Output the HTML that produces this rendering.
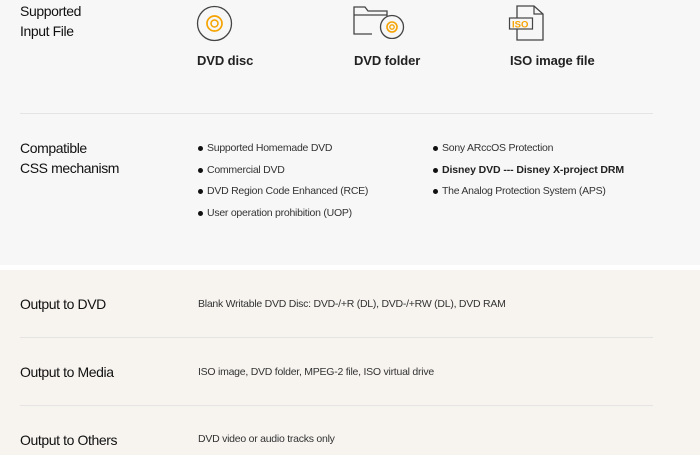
<!DOCTYPE html>
<html><head><meta charset="utf-8"><style>
*{margin:0;padding:0;box-sizing:border-box}
body{width:700px;height:455px;overflow:hidden;background:#fff;font-family:"Liberation Sans",sans-serif;color:#222;position:relative}
.top{position:absolute;left:0;top:0;width:700px;height:265px;background:#f7f7f7}
.bot{position:absolute;left:0;top:270px;width:700px;height:185px;background:#f7f4f0}
.a{position:absolute;white-space:nowrap}
.lbl{font-size:14px;line-height:20px;color:#111;letter-spacing:-0.4px}
.it{font-size:10.5px;color:#333;letter-spacing:-0.25px}
.b:before{content:"";display:inline-block;width:5px;height:5px;border-radius:50%;background:#111;margin-right:4px;vertical-align:0px}
.t{font-size:13px;font-weight:bold;color:#222;letter-spacing:-0.1px}
.line{position:absolute;left:20px;width:633px;height:1px;background:#e4e4e4}
</style></head><body>
<div class="top"></div><div class="bot"></div>
<div class="a lbl" style="left:20px;top:1px">Supported<br>Input File</div>
<svg class="a" style="left:196px;top:5px" width="38" height="38" viewBox="0 0 38 38"><circle cx="18.5" cy="18.5" r="17" fill="none" stroke="#444" stroke-width="1.3"/><circle cx="18.5" cy="18.5" r="7.5" fill="none" stroke="#f5a300" stroke-width="1.7"/><circle cx="18.5" cy="18.5" r="3.5" fill="none" stroke="#f5a300" stroke-width="1.5"/></svg>
<svg class="a" style="left:352px;top:5px" width="54" height="34" viewBox="0 0 54 34"><path d="M20 29H2V2h11l3 4h19v8" fill="none" stroke="#444" stroke-width="1.3"/><path d="M2 10h33" stroke="#444" stroke-width="1.2"/><circle cx="40" cy="22" r="11.5" fill="#f7f7f7" stroke="#444" stroke-width="1.3"/><circle cx="40" cy="22" r="5" fill="none" stroke="#f5a300" stroke-width="1.6"/><circle cx="40" cy="22" r="2.2" fill="none" stroke="#f5a300" stroke-width="1.3"/></svg>
<svg class="a" style="left:508px;top:4px" width="38" height="38" viewBox="0 0 38 38"><path d="M9 2h17l9 8v26H9z" fill="none" stroke="#444" stroke-width="1.3"/><path d="M26 2v8h9" fill="none" stroke="#444" stroke-width="1.2"/><rect x="1.5" y="14" width="23" height="11" fill="#f7f7f7" stroke="#444" stroke-width="1.2"/><text x="4" y="23.5" font-family="Liberation Sans" font-size="9.5" font-weight="bold" fill="#f5a300">ISO</text></svg>
<div class="a t" style="left:197px;top:53px">DVD disc</div>
<div class="a t" style="left:354px;top:53px">DVD folder</div>
<div class="a t" style="left:510px;top:53px">ISO image file</div>
<div class="line" style="top:113px"></div>
<div class="a lbl" style="left:20px;top:138px">Compatible<br>CSS mechanism</div>
<div class="a it b" style="left:198px;top:142px">Supported Homemade DVD</div>
<div class="a it b" style="left:198px;top:164px">Commercial DVD</div>
<div class="a it b" style="left:198px;top:185px">DVD Region Code Enhanced (RCE)</div>
<div class="a it b" style="left:198px;top:207px">User operation prohibition (UOP)</div>
<div class="a it b" style="left:433px;top:142px">Sony ARccOS Protection</div>
<div class="a it b" style="left:433px;top:164px;font-weight:bold;color:#222;letter-spacing:-0.1px">Disney DVD --- Disney X-project DRM</div>
<div class="a it b" style="left:433px;top:185px">The Analog Protection System (APS)</div>
<div class="a lbl" style="left:20px;top:294px">Output to DVD</div>
<div class="a it" style="left:198px;top:298px">Blank Writable DVD Disc: DVD-/+R (DL), DVD-/+RW (DL), DVD RAM</div>
<div class="line" style="top:337px"></div>
<div class="a lbl" style="left:20px;top:362px">Output to Media</div>
<div class="a it" style="left:198px;top:366px">ISO image, DVD folder, MPEG-2 file, ISO virtual drive</div>
<div class="line" style="top:405px"></div>
<div class="a lbl" style="left:20px;top:430px">Output to Others</div>
<div class="a it" style="left:198px;top:433px">DVD video or audio tracks only</div>
</body></html>
